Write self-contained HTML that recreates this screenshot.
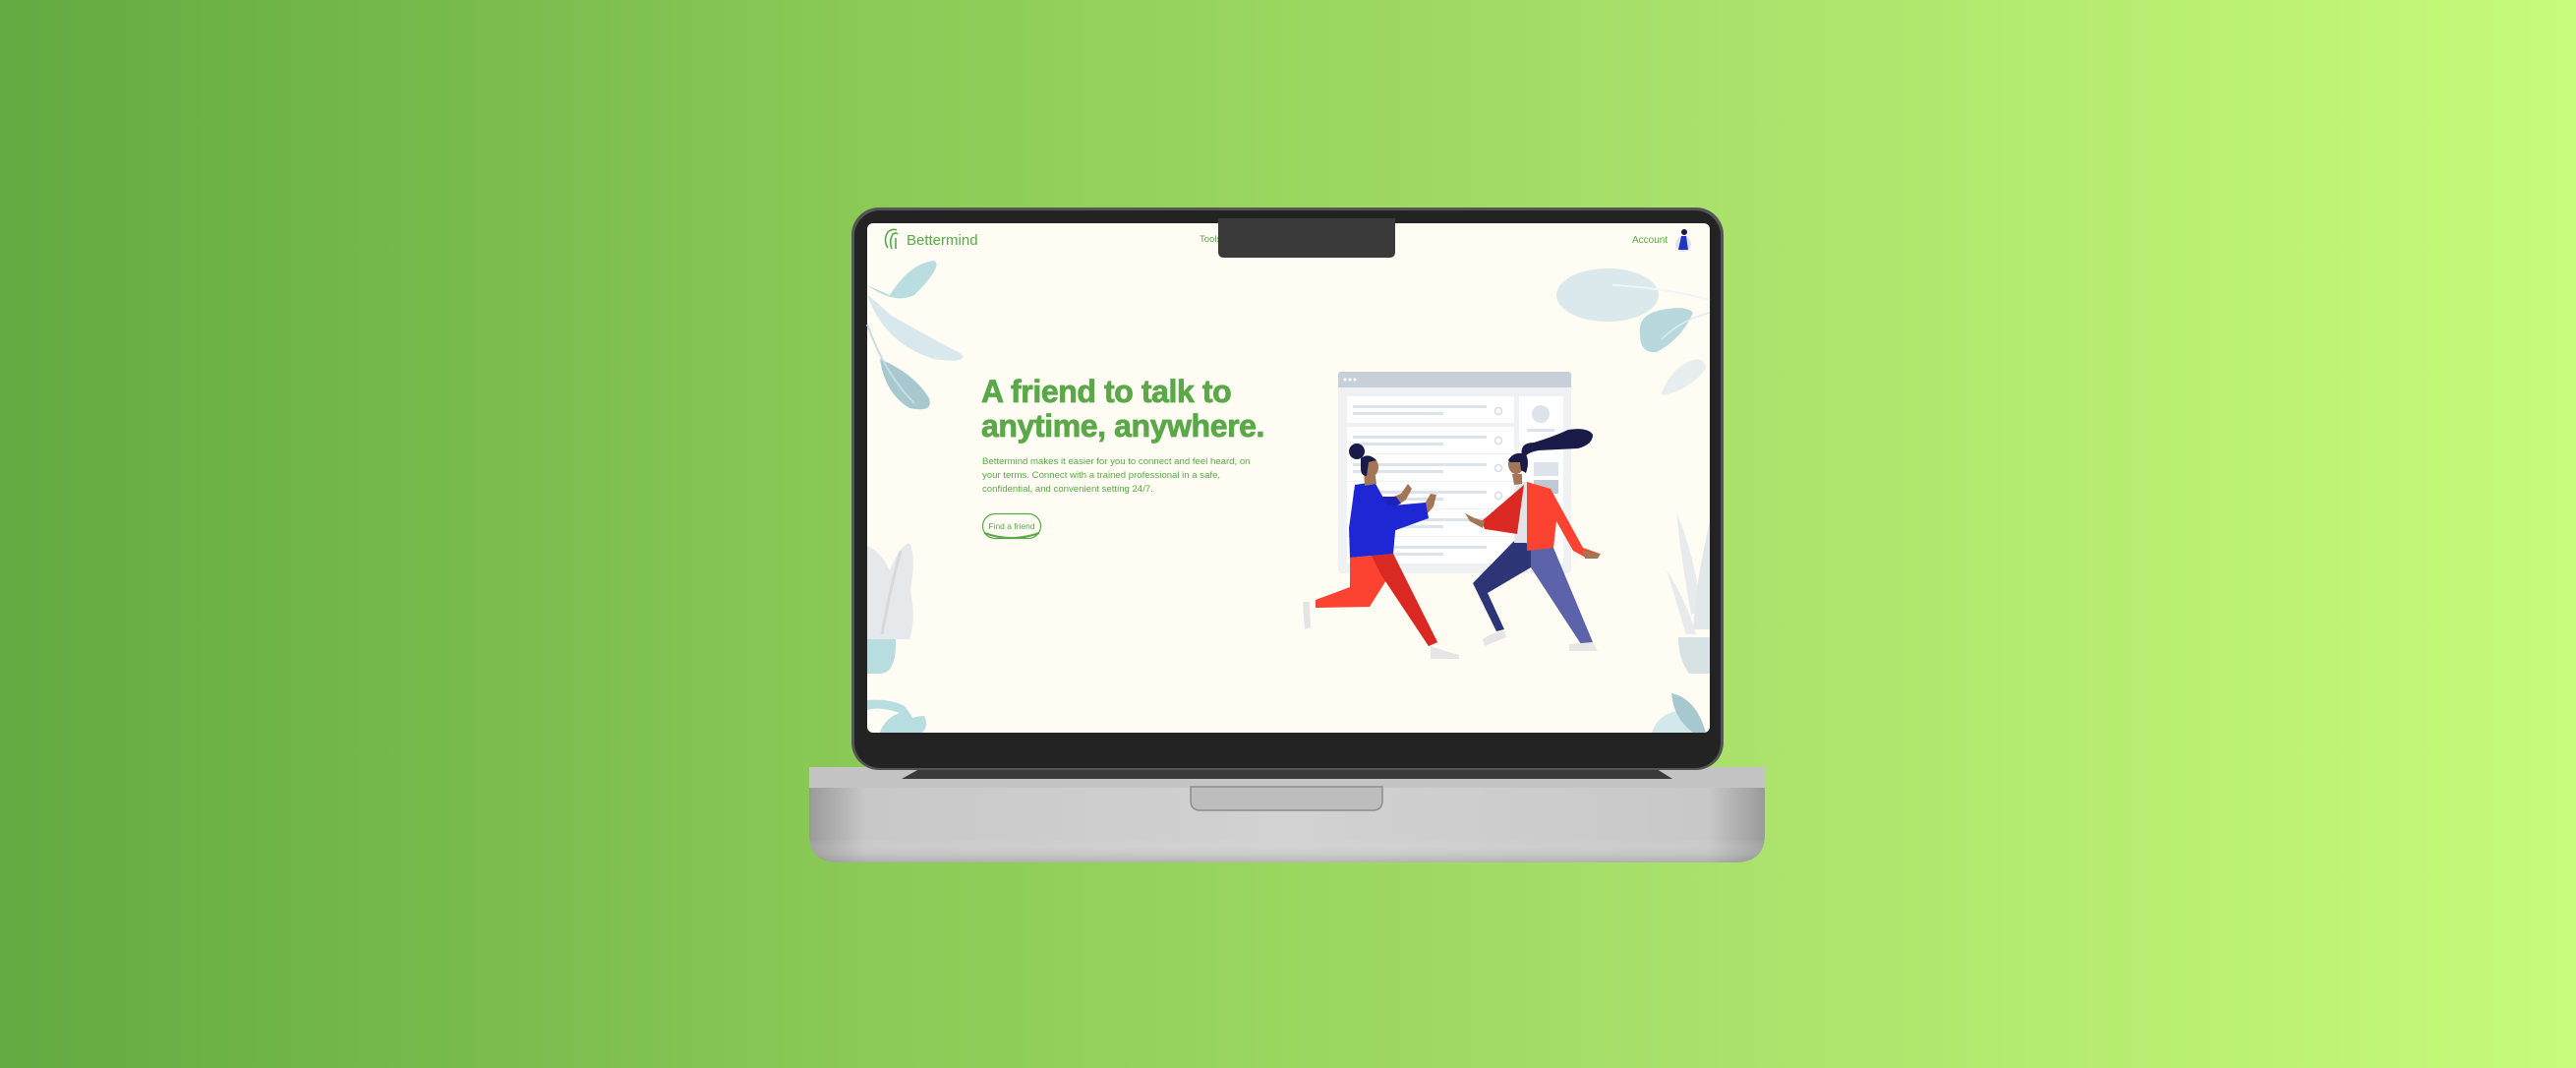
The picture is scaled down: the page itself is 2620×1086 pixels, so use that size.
<!DOCTYPE html>
<html><head><meta charset="utf-8"><style>
html,body{margin:0;padding:0;width:2620px;height:1086px;overflow:hidden}
body{background:linear-gradient(90deg,#63aa42 0%,#8ccb57 35%,#a8e06a 65%,#c5fc7b 100%)}
svg{position:absolute;left:0;top:0}
</style></head><body>
<svg width="2620" height="1086" viewBox="0 0 2620 1086" xmlns="http://www.w3.org/2000/svg" font-family="Liberation Sans, sans-serif">
<defs>
<linearGradient id="base" x1="0" y1="0" x2="1" y2="0">
<stop offset="0" stop-color="#9a9a9a"/><stop offset="0.06" stop-color="#c8c8c8"/><stop offset="0.5" stop-color="#d2d2d2"/><stop offset="0.94" stop-color="#c8c8c8"/><stop offset="1" stop-color="#9a9a9a"/>
</linearGradient>
<linearGradient id="basev" x1="0" y1="0" x2="0" y2="1">
<stop offset="0" stop-color="#fff" stop-opacity="0"/><stop offset="0.7" stop-color="#fff" stop-opacity="0"/><stop offset="1" stop-color="#888" stop-opacity="0.4"/>
</linearGradient>
</defs>
<path d="M823,800 L1795,800 L1795,848 Q1795,877 1765,877 L853,877 Q823,877 823,848 Z" fill="url(#base)"/>
<path d="M823,800 L1795,800 L1795,848 Q1795,877 1765,877 L853,877 Q823,877 823,848 Z" fill="url(#basev)"/>
<rect x="823" y="780" width="972" height="21" fill="#c4c4c4"/>
<path d="M917,792 L935,782 L1685,782 L1701,792 Z" fill="#3a3a3a"/>
<path d="M1211,800 L1406,800 L1406,814 Q1406,824 1396,824 L1221,824 Q1211,824 1211,814 Z" fill="#bdbdbd" stroke="#8d8d8d" stroke-width="1.5"/>
<rect x="866" y="211" width="887" height="572" rx="28" fill="#555"/>
<rect x="869" y="214" width="881" height="567" rx="26" fill="#232323"/>
<rect x="882" y="227" width="857" height="518" rx="6" fill="#fffcf4"/>
<path d="M882,290 Q910,310 930,300 Q960,270 950,265 Q925,268 905,300 Z" fill="#b9dde0"/>
<path d="M882,300 Q900,350 950,365 Q985,370 978,360 Q940,340 905,320 Q890,305 882,300Z" fill="#d8e8ec"/>
<path d="M895,365 Q900,400 925,415 Q950,420 945,405 Q930,380 895,365Z" fill="#a6c8ce"/>
<path d="M882,330 Q900,380 930,410" stroke="#c7dde2" stroke-width="2" fill="none"/>
<path d="M882,555 Q895,560 905,580 Q915,555 925,552 Q932,565 926,600 Q932,630 925,650 L882,650Z" fill="#e6e9ec"/>
<path d="M916,560 Q905,600 897,645" stroke="#d6dadd" stroke-width="3" fill="none"/>
<path d="M882,650 L911,650 Q912,685 895,685 L882,685Z" fill="#b8dde0"/>
<path d="M882,712 Q905,710 920,718 Q930,730 935,745 L895,745 Q900,730 915,725 Q895,718 882,722Z" fill="#b8dde0"/>
<path d="M915,745 Q920,728 940,728 Q945,738 938,745Z" fill="#b8dde0"/>
<ellipse cx="1635" cy="300" rx="52" ry="27" fill="#dbe9ec"/>
<path d="M1640,290 Q1690,292 1739,305" stroke="#eef6f7" stroke-width="2" fill="none"/>
<path d="M1668,340 Q1665,320 1690,315 Q1715,310 1722,318 Q1710,345 1685,358 Q1668,360 1668,340Z" fill="#b7d9dd"/>
<path d="M1690,345 Q1710,325 1739,318" stroke="#dbecee" stroke-width="1.5" fill="none"/>
<path d="M1690,400 Q1700,372 1725,365 Q1735,365 1735,375 Q1720,395 1692,402Z" fill="#e8edef"/>
<path d="M1705,520 Q1725,570 1730,620 L1720,625 Q1710,570 1705,520Z" fill="#e7ebee"/>
<path d="M1739,530 Q1725,590 1722,640 L1739,640Z" fill="#e2e7ea"/>
<path d="M1695,580 Q1715,610 1725,645 L1715,645Z" fill="#e7ebee"/>
<path d="M1707,648 L1739,648 L1739,685 L1718,685 Q1707,670 1707,648Z" fill="#d7e2e5"/>
<path d="M1680,745 Q1688,722 1715,722 Q1730,740 1725,745Z" fill="#d3e8eb"/>
<path d="M1700,705 Q1725,710 1735,745 L1722,745 Q1702,730 1700,705Z" fill="#a6c8ce"/>
<g fill="none" stroke="#5aa848" stroke-width="1.6">
<path d="M903,252 Q898,244 903,236 Q908,232 912,234"/>
<path d="M907,253 Q904,245 908,238 Q911,236 913,238"/>
<path d="M911,253 L911,242"/>
</g>
<text x="922" y="249" font-size="15" fill="#5aa848">Bettermind</text>
<text x="1220" y="246" font-size="9.5" fill="#5aa848">Tools</text>
<text x="1660" y="247" font-size="10" fill="#5aa848">Account</text>
<circle cx="1712" cy="248" r="8" fill="#dfe4ee"/>
<path d="M1707,254 L1710,240 L1715,240 L1717,254Z" fill="#2233c8"/>
<circle cx="1713" cy="236" r="3" fill="#1b1b4a"/>
<path d="M1239,222 L1419,222 L1419,256 Q1419,262 1413,262 L1245,262 Q1239,262 1239,256Z" fill="#3a3a3a"/>
<text x="998" y="409" font-size="32" font-weight="bold" fill="#5aa848" stroke="#5aa848" stroke-width="0.8" letter-spacing="-0.4">A friend to talk to</text>
<text x="998" y="444" font-size="32" font-weight="bold" fill="#5aa848" stroke="#5aa848" stroke-width="0.8" letter-spacing="-0.4">anytime, anywhere.</text>
<g font-size="9.6" fill="#5aa848">
<text x="999" y="472">Bettermind makes it easier for you to connect and feel heard, on</text>
<text x="999" y="486">your terms. Connect with a trained professional in a safe,</text>
<text x="999" y="500">confidential, and convenient setting 24/7.</text>
</g>
<rect x="999.5" y="522.5" width="59" height="25" rx="12.5" fill="#fffcf4" stroke="#5aa848" stroke-width="1.2"/>
<path d="M1001,542 Q1029,552 1057,542" stroke="#5aa848" stroke-width="2" fill="none"/>
<text x="1029" y="538" font-size="8.5" fill="#5aa848" text-anchor="middle">Find a friend</text>
<rect x="1361" y="378" width="237" height="205" rx="3" fill="#f0f1f3"/>
<path d="M1361,381 Q1361,378 1364,378 L1595,378 Q1598,378 1598,381 L1598,394 L1361,394Z" fill="#c7d0d8"/>
<circle cx="1368" cy="386" r="1.5" fill="#fff"/><circle cx="1373" cy="386" r="1.5" fill="#fff"/><circle cx="1378" cy="386" r="1.5" fill="#fff"/>
<g>
<rect x="1370" y="403" width="170" height="27" fill="#fff"/>
<rect x="1370" y="434" width="170" height="27" fill="#fff"/>
<rect x="1370" y="462" width="170" height="27" fill="#fff"/>
<rect x="1370" y="490" width="170" height="27" fill="#fff"/>
<rect x="1370" y="518" width="170" height="27" fill="#fff"/>
<rect x="1370" y="546" width="170" height="27" fill="#fff"/>
<rect x="1545" y="403" width="45" height="170" fill="#fff"/>
</g>
<g fill="#dde3ea">
<rect x="1376" y="412" width="136" height="3"/><rect x="1376" y="419" width="92" height="3"/>
<rect x="1376" y="443" width="136" height="3"/><rect x="1376" y="450" width="92" height="3"/>
<rect x="1376" y="471" width="136" height="3"/><rect x="1376" y="478" width="92" height="3"/>
<rect x="1376" y="499" width="136" height="3"/><rect x="1376" y="506" width="92" height="3"/>
<rect x="1376" y="527" width="136" height="3"/><rect x="1376" y="534" width="92" height="3"/>
<rect x="1376" y="555" width="136" height="3"/><rect x="1376" y="562" width="92" height="3"/>
<circle cx="1567" cy="421" r="9"/><rect x="1553" y="436" width="28" height="3"/>
<rect x="1560" y="470" width="25" height="14"/><rect x="1560" y="488" width="25" height="14" fill="#c0c9d3"/>
</g>
<g fill="none" stroke="#d5dbe2" stroke-width="1.5">
<circle cx="1524" cy="418" r="3.5"/><circle cx="1524" cy="448" r="3.5"/><circle cx="1524" cy="476" r="3.5"/><circle cx="1524" cy="504" r="3.5"/><circle cx="1524" cy="532" r="3.5"/>
</g>
<path d="M1373,567 L1417,563 L1462,653 L1453,657 L1410,590 L1393,617 L1338,618 L1338,610 L1373,597Z" fill="#fc4332"/>
<path d="M1395,565 L1417,563 L1462,653 L1453,657 L1405,585Z" fill="#da2922"/>
<path d="M1325,612 L1332,612 L1333,638 L1327,640Z" fill="#e4e4e4"/>
<path d="M1455,657 L1470,662 L1484,666 L1484,670 L1455,670Z" fill="#e6e6e6"/>
<path d="M1405,510 L1425,502 L1432,492 L1436,497 L1430,508 L1412,520Z" fill="#a27656"/>
<path d="M1398,505 L1420,505 L1425,512 L1405,520Z" fill="#1e22b8"/>
<path d="M1448,514 L1455,502 L1461,503 L1458,515 L1452,522Z" fill="#a27656"/>
<path d="M1378,493 L1398,490 L1420,530 L1417,563 L1373,567 L1372,537Z" fill="#1e27d3"/>
<path d="M1405,515 L1450,511 L1453,527 L1417,540Z" fill="#1e27d3"/>
<path d="M1387,478 L1398,478 L1400,492 L1388,494Z" fill="#a27656"/>
<ellipse cx="1394" cy="475" rx="8" ry="10" fill="#a27656"/>
<circle cx="1380" cy="459" r="8" fill="#1b1b4a"/>
<path d="M1384,466 Q1392,460 1400,468 L1392,470 L1390,484 Q1384,484 1384,476Z" fill="#1b1b4a"/>
<path d="M1550,553 L1580,557 L1620,653 L1608,655 L1557,577Z" fill="#5c63ab"/>
<path d="M1540,550 L1557,553 L1557,577 L1513,603 L1530,640 L1522,642 L1498,593Z" fill="#2e3577"/>
<path d="M1508,650 Q1520,642 1530,642 L1532,648 L1510,657Z" fill="#e6e6e6"/>
<path d="M1596,655 L1620,653 L1625,662 L1596,662Z" fill="#e6e6e6"/>
<path d="M1543,490 L1556,490 L1555,552 L1540,552Z" fill="#e2e4ea"/>
<path d="M1550,493 L1507,530 L1510,538 L1543,543Z" fill="#da2922"/>
<path d="M1490,522 L1500,527 L1510,530 L1508,537 L1495,530Z" fill="#a27656"/>
<path d="M1553,490 L1577,497 L1610,557 L1627,563 L1613,567 L1600,560 L1583,530 L1580,557 L1553,560Z" fill="#fc4332"/>
<path d="M1610,560 L1628,563 L1625,568 L1612,568Z" fill="#a27656"/>
<path d="M1538,482 L1548,482 L1548,492 L1540,493Z" fill="#a27656"/>
<ellipse cx="1542" cy="472" rx="8" ry="10" fill="#a27656"/>
<path d="M1534,468 Q1540,458 1552,462 Q1556,470 1552,481 L1547,478 L1546,470 L1536,470Z" fill="#1b1b4a"/>
<path d="M1548,464 Q1545,450 1560,450 Q1580,444 1595,437 Q1615,434 1620,442 Q1620,452 1605,456 Q1585,457 1565,458 Q1553,460 1550,466Z" fill="#1b1b4a"/>
</svg>
</body></html>
